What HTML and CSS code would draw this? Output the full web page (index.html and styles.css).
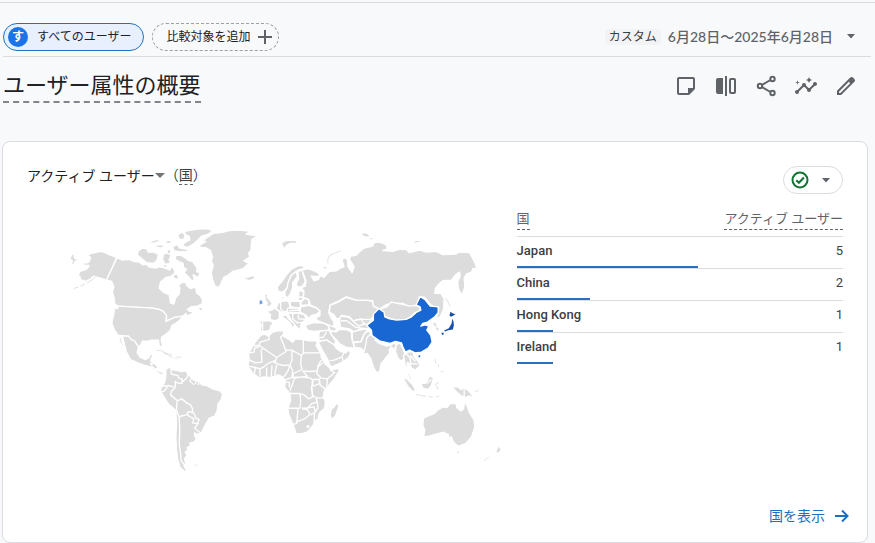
FILE: index.html
```html
<!DOCTYPE html>
<html lang="ja">
<head>
<meta charset="utf-8">
<meta name="viewport" content="width=device-width, initial-scale=1">
<title>ユーザー属性の概要</title>
<link rel="stylesheet" href="styles.css">
</head>
<body>
<div class="page">
  <header class="topbar">
    <div class="chips">
      <button class="chip chip-active" type="button"><span class="chip-badge">す</span>すべてのユーザー</button>
      <button class="chip chip-add" type="button">比較対象を追加
        <svg class="plus" viewBox="0 0 14 14" aria-hidden="true"><path d="M7 0v14M0 7h14"/></svg>
      </button>
    </div>
    <button class="daterange" type="button">
      <span class="preset">カスタム</span>
      <span class="dates">6月28日～2025年6月28日</span>
      <svg class="caret" viewBox="0 0 8 5" aria-hidden="true"><path d="M0 0h8L4 4.5z"/></svg>
    </button>
  </header>

  <div class="titlebar">
    <h1>ユーザー属性の概要</h1>
    <div class="tools">
      <button type="button" aria-label="メモ"><svg viewBox="0 0 24 24"><path d="M19 5v9h-5v5H5V5h14m0-2H5c-1.100 0-2 .9-2 2v14c0 1.100.9 2 2 2h10l6-6V5c0-1.100-.9-2-2-2z"/></svg></button>
      <button type="button" aria-label="比較"><svg viewBox="0 0 24 24"><path d="M4 4h5v16H4a2 2 0 0 1-2-2V6a2 2 0 0 1 2-2zM11 2h2v20h-2zM17 4h3a2 2 0 0 1 2 2v12a2 2 0 0 1-2 2h-3a2 2 0 0 1-2-2V6a2 2 0 0 1 2-2zm0 2v12h3V6z"/></svg></button>
      <button type="button" aria-label="共有"><svg viewBox="0 0 24 24"><g class="line"><circle cx="18.500" cy="5" r="2.200"/><circle cx="6" cy="12" r="2.200"/><circle cx="18.500" cy="19" r="2.200"/><path d="M8 11l8.500-5M8 13l8.500 5"/></g></svg></button>
      <button type="button" aria-label="分析情報"><svg viewBox="0 0 24 24"><path d="M21 8c-1.450 0-2.260 1.440-1.930 2.510l-3.550 3.560c-.3-.09-.74-.09-1.040 0l-2.550-2.550C12.270 10.450 11.460 9 10 9c-1.450 0-2.270 1.440-1.930 2.520l-4.560 4.550C2.440 15.740 1 16.550 1 18c0 1.100.9 2 2 2 1.450 0 2.260-1.440 1.930-2.510l4.550-4.560c.3.090.74.090 1.040 0l2.550 2.550C12.730 16.550 13.540 18 15 18c1.450 0 2.270-1.440 1.930-2.520l3.560-3.550C21.560 12.260 23 11.450 23 10c0-1.100-.9-2-2-2z"/><path d="M15 9l.94-2.070L18 6l-2.060-.93L15 3l-.92 2.070L12 6l2.080.93zM3.500 11L4 9l2-.5L4 8l-.5-2L3 8l-2 .5L3 9z"/></svg></button>
      <button type="button" aria-label="編集"><svg viewBox="0 0 24 24"><path d="M20.410 4.940l-1.350-1.350a2 2 0 0 0-2.830 0L3 16.820V21h4.180L20.410 7.770a2 2 0 0 0 0-2.830zM6.410 19.060L5 19v-1.360l9.820-9.820 1.410 1.410z"/></svg></button>
    </div>
  </div>

  <main class="card">
    <div class="card-head">
      <h2><button class="metric" type="button">アクティブ ユーザー<svg viewBox="0 0 10 5" aria-hidden="true"><path d="M0 0h10L5 5z"/></svg></button><span class="dimension">（<span class="hint">国</span>）</span></h2>
      <button class="status" type="button" aria-label="データの品質">
        <svg class="check" viewBox="0 0 18 18"><circle cx="9" cy="9" r="7.500"/><path d="M5.300 9.200l2.600 2.600 5-5.300"/></svg>
        <svg class="caret" viewBox="0 0 8 5"><path d="M0 0h8L4 4.500z"/></svg>
      </button>
    </div>

    <div class="card-body">
      <svg class="map" viewBox="84 660 1467 765" role="img" aria-label="国別アクティブ ユーザーの地図">
        <!-- North America -->
        <g transform="translate(180 660)">
          <path d="M173 112L150 104 138 98 127 94 108 98 97 100 84 106 94 112 92 122 86 128 70 128 76 136 90 136 86 144 76 150 62 154 58 166 64 172 62 178 80 184 92 178 104 168 116 172 136 178 142 182Z"/>
          <path d="M40 100L46 106 46 114 60 120 48 124 46 132 36 134 40 122 32 116Z"/>
          <path class="isle" d="M110 170L98 180 84 188M78 192L64 198M58 201L44 205"/>
          <path d="M174 113L190 120 210 118 224 124 240 126 250 134 262 132 268 140 290 144 300 140 310 142 322 146 332 150 336 138 346 150 346 160 334 170 320 172 304 186 300 204 312 216 330 224 334 248 344 252 350 232 360 222 362 204 358 196 366 188 378 186 384 198 394 206 404 202 410 204 412 218 424 228 430 240 428 252 414 258 396 260 384 268 392 274 404 272 396 282 384 288 380 280 370 290 346 292 322 304 322 286 312 274 300 268 280 264 176 258 166 250 166 238 160 216 164 200 158 184 150 182 142 180Z"/>
          <path d="M176 258L280 264 300 268 312 274 322 286 320 304 346 292 370 288 364 298 352 308 338 316 334 330 318 344 308 350 306 362 310 374 306 382 300 376 298 360 278 360 262 364 250 362 246 372 238 382 226 364 214 358 208 348 178 346 166 330 158 308 164 282 166 262 176 266Z"/>
          <path d="M190 348L208 348 216 358 226 362 238 380 234 398 244 412 258 418 268 414 274 402 282 404 274 422 288 434 290 450 304 454 318 462 306 464 292 456 278 442 258 436 236 428 214 418 200 392Z"/>
          <path d="M178 350L186 352 190 368 200 386 194 384 184 370Z"/>
          <path class="isle" d="M292 390L308 392 322 400 338 404M352 410L366 412"/>
          <path d="M234 104L238 92 250 84 262 86 268 96 284 96 298 104 294 120 284 130 262 128 248 116Z"/>
          <path d="M350 106L366 106 382 116 388 122 400 124 414 144 412 154 424 160 414 172 402 164 406 182 396 180 386 168 374 158 382 148 372 142 372 130 358 124 348 118Z"/>
          <path d="M312 104L322 98 336 104 330 120 336 128 318 134 310 118ZM308 134L320 132 330 140 316 142ZM340 164L354 162 360 178 346 176Z"/>
          <path d="M418 262L426 262 434 272 420 272Z"/>
        </g>
        <!-- Arctic islands, Greenland and Iceland -->
        <g transform="translate(420 660)">
          <path d="M136 34L170 28 205 26 220 32 208 42 188 48 176 60 160 74 146 82 130 78 136 68 152 60 150 48 138 44Z"/>
          <path d="M116 42L130 36 138 46 134 58 120 58ZM100 80L114 74 122 84 144 88 148 94 124 96 104 92ZM26 68L52 58 68 62 44 70ZM44 80L56 74 80 76 66 84ZM78 64L92 60 98 68 84 72ZM84 90L96 88 94 102 84 100Z"/>
          <path d="M180 76L200 64 184 68 204 52 222 40 246 38 270 32 300 30 332 34 320 42 356 48 338 58 336 72 336 88 328 100 332 110 314 122 328 130 312 146 296 150 280 154 268 164 254 172 248 184 242 198 236 203 226 196 220 178 216 158 222 136 216 124 220 112 214 92 202 84 184 82Z"/>
          <path d="M314 168L322 172 342 166 348 174 330 182 318 178Z"/>
        </g>
        <!-- South America -->
        <g transform="translate(450 1050)">
          <path d="M50 58L62 50 66 58 78 60 96 64 110 62 116 70 122 78 134 90 150 94 158 104 172 106 190 116 212 122 220 132 216 148 206 162 204 182 196 198 180 204 172 218 162 236 156 250 144 252 136 248 136 256 142 266 134 276 122 278 124 286 114 292 116 300 108 306 114 314 106 326 110 340 104 346 110 356 118 364 104 362 92 350 86 330 82 300 80 260 82 220 80 180 58 162 44 140 34 124 36 108 46 98 50 80Z"/>
          <path class="border" d="M66 58L66 72 86 76 88 84 98 86 98 100 84 98 78 94 78 112 66 124 64 134 78 146 84 150 82 180 90 200 92 240 90 280 94 310 96 332 112 350M36 110L46 106 56 108 46 122 36 126M56 106L74 110M98 86L102 94 114 82 116 72M128 84L122 92 134 104M142 92L138 102M150 96L146 104M84 152L98 146 112 158 124 164 130 176 130 186 118 184 112 194 94 198 88 204M114 192L120 198 134 206 130 218 144 220 150 208 140 204 136 192 130 186M148 218L136 234 144 240 156 250"/>
          <path class="isle" d="M42 8L56 14 70 22M76 24L84 24M136 344L144 345"/>
          <path d="M4 40L16 40 26 50 22 58 12 52Z"/>
        </g>
        <!-- Europe, Africa and western Asia -->
        <g transform="translate(720 750)">
          <path d="M64 256L76 252 88 258 100 246 116 242 134 242 132 258 146 266 160 276 168 266 190 268 210 272 230 272 234 280 230 286 244 308 246 322 256 340 270 352 274 360 300 354 298 364 282 390 264 410 254 424 252 440 258 454 256 474 240 488 236 506 226 514 222 524 206 544 188 550 170 550 166 536 158 516 148 492 146 474 154 450 152 430 136 412 138 392 130 380 116 374 94 382 74 380 60 384 40 368 28 352 26 342 30 330 28 310 42 284 54 268Z"/>
          <path d="M294 456L298 470 288 498 278 508 272 496 276 476 284 470Z"/>
          <path class="border" d="M42 286L60 286 62 276 90 268 88 258M30 308L44 306 46 294 60 290M60 286L112 322 140 304 134 286 124 262 132 252M70 296L66 300 68 336 48 338 32 330M112 322L110 330 86 340 74 350 62 356 48 352 28 348M140 300L158 300 186 316 192 310 192 268M192 308L242 308M186 316L184 340 188 358 162 370 160 382 186 380 204 378 190 362M158 300L158 330 152 344 132 346 116 342 104 336 110 330M152 344L146 362 134 380M112 344L106 374M190 362L210 364 234 362 236 346 246 330M152 344L160 362 158 382 138 388M250 338L236 350 232 370 246 384 264 386 286 368 272 358M240 384L242 404 258 416M264 386L262 408M222 388L240 388 240 400 222 408 218 398ZM166 384L160 400 152 422M166 384L188 380 214 384 222 392 216 412 220 440 208 446 194 434 182 430 152 430M138 396L150 396 150 412M218 412L220 436 234 444 254 442M182 430L184 452 182 474 148 474M188 474L204 474 218 460 234 456 230 444M176 476L174 496 172 520 160 522M188 476L204 478 212 492 196 506 174 514M204 474L224 470 228 486 214 494M234 456L236 472 226 488 224 516M62 356L62 380M82 352L82 380M98 346L96 380M48 352L46 368"/>
          <circle class="gap" cx="206" cy="529" r="5"/>
          <path d="M116 122L114 110 128 94 140 76 156 58 178 46 192 48 196 56 182 58 170 64 156 76 146 98 144 112 134 124 124 126Z"/>
          <path d="M146 98L156 76 170 64 174 80 160 98 160 112 154 130 146 142 138 140 136 126 144 112Z"/>
          <path d="M176 66L188 58 192 76 198 94 190 108 176 112 170 102 178 86Z"/>
          <path d="M76 130L86 134 84 142 92 150 100 162 92 168 78 170 84 160 78 150Z"/>
          <path d="M82 184L96 180 106 174 120 184 120 206 108 212 92 208 94 194Z"/>
          <path d="M60 212L90 212 104 218 94 228 92 240 80 244 62 242 66 226Z"/>
          <path class="border" d="M70 214L70 242"/>
          <path d="M110 176L116 160 124 154 148 152 152 172 144 184 126 186Z"/>
          <path class="border" d="M124 156L124 176 134 186"/>
          <path d="M128 138L134 138 134 150 128 148ZM152 154L182 154 184 168 178 174 154 170ZM178 122L192 124 192 140 178 142ZM174 142L190 142 192 150 180 152Z"/>
          <path d="M186 154L198 144 208 150 208 164 184 166Z"/>
          <path d="M184 170L208 166 232 174 242 184 232 192 216 196 210 206 198 194 182 186Z"/>
          <path d="M126 198L142 194 146 204 168 222 160 234 152 218 134 204Z"/>
          <path d="M146 190L178 190 196 194 200 210 186 218 182 240 170 228 154 208Z"/>
          <path class="border" d="M160 192L160 206 176 220M176 194L178 206 198 208M166 214L186 218"/>
          <path d="M146 174L176 174 182 188 150 188 142 184Z"/>
          <path class="border" d="M150 182L180 180"/>
          <path d="M198 226L220 218 250 218 266 224 270 240 244 242 224 244 204 240Z"/>
          <path d="M240 244L268 240 278 256 290 276 284 284 262 270 240 272 238 258Z"/>
          <path class="border" d="M240 262L252 262 262 244"/>
          <path d="M236 274L262 270 284 284 292 296 304 304 320 308 326 298 334 308 328 322 312 334 296 342 276 350 270 342 264 326 250 302Z"/>
          <path class="border" d="M270 332L284 330 308 320 314 308M308 320L312 334"/>
          <path d="M256 220L276 224 292 236 286 244 272 240 268 228Z"/>
          <path d="M274 242L290 246 300 238 320 238 336 246 338 270 346 294 322 292 300 280 288 266 276 254Z"/>
          <path d="M272 166L296 156 320 142 350 150 380 150 400 154 402 168 418 176 410 186 396 206 384 212 364 206 340 212 330 200 306 196 304 206 290 204 284 194 270 186Z"/>
          <path d="M300 212L304 198 330 202 340 212 364 208 396 208 386 222 388 236 366 234 346 246 330 236 304 232Z"/>
          <path class="border" d="M304 212L322 212 350 232 366 234M340 212L358 228 372 222 388 222M366 210L376 222"/>
          <path d="M338 246L360 240 388 236 374 252 364 274 340 276Z"/>
          <path d="M342 278L366 274 374 252 388 240 396 254 388 270 390 290 378 306 364 294 346 292Z"/>
          <path class="ireland" d="M61 151L68 151 70 160 61 163Z"/>
          <!-- Russia -->
          <path d="M188 60L206 56 228 64 242 72 236 80 216 78 224 92 238 88 240 76 254 82 270 64 292 62 300 56 314 50 308 30 314 22 324 28 326 50 338 68 344 50 330 28 334 18 350 16 360 6 374 -6 400 -12 404 -22 420 -24 440 -16 444 -4 430 2 460 4 480 -2 500 -2 510 8 540 0 562 6 590 4 610 14 650 12 660 6 690 8 698 22 706 38 712 54 700 56 696 66 680 72 674 86 676 110 668 136 658 120 654 96 662 78 660 66 648 74 636 90 610 92 600 100 588 114 586 130 604 130 614 146 612 178 602 200 590 208 594 192 598 172 584 172 570 160 556 142 540 140 534 154 538 174 514 172 490 160 460 160 440 164 420 176 402 168 400 152 380 150 350 150 320 140 296 154 272 164 268 188 276 204 284 216 282 230 256 220 240 214 228 206 242 196 242 182 230 172 214 166 208 148 192 142 194 124 186 112 198 108 200 92Z"/>
          <path class="isle" d="M266 40Q262 20 280 12T304 2"/>
          <path d="M250 48L264 50 266 58 252 56Z"/>
        </g>
        <!-- Arctic Ocean islands -->
        <g transform="translate(1020 660)">
          <path d="M62 40L80 38 92 46 88 52 74 50ZM88 54L102 52 102 58 90 60ZM218 64L238 60 246 66 226 70ZM246 64L262 62 260 68Z"/>
          <path class="isle" d="M318 234L326 246 332 260"/>
          <path d="M-174 68L-156 60-130 62-124 70-146 70-158 76-166 88Z"/>
        </g>
        <!-- East and South Asia, Oceania -->
        <g transform="translate(1080 870)">
          <path d="M16 178L20 158 22 144 32 132 44 142 52 150 60 156 80 166 92 164 108 158 110 166 104 180 98 172 90 176 90 190 72 212 64 222 62 240 54 250 44 236 34 206 24 190 12 194Z"/>
          <path class="border" d="M46 148L56 158 82 168 94 164 94 184"/>
          <path d="M64 242L70 250 64 256Z"/>
          <path d="M60 58L82 50 96 36 126 42 150 48 170 46 184 54 180 62 166 68 154 80 140 88 110 90 90 84 76 78 72 66Z"/>
          <path class="blue" d="M22 106L42 90 42 72 58 56 74 66 76 80 90 86 112 90 140 88 156 80 172 66 184 60 182 50 170 44 182 20 196 28 212 48 236 50 236 68 226 80 204 96 190 100 184 108 198 104 208 108 202 120 214 136 218 156 206 174 186 186 166 188 150 180 138 186 130 170 126 158 108 154 92 160 60 152 38 136 36 120Z"/>
          <path class="blue-flat" d="M177 196L183 196 181 202 177 200Z"/>
          <path d="M218 98L228 94 234 108 240 118 236 126 228 116Z"/>
          <path class="border" d="M226 112L236 108"/>
          <path class="navy" d="M273 65L280 70 288 72 281 77 274 80 270 76ZM279 86L282 94 283 106 280 118 266 120 256 124 254 121 268 114 276 101ZM246 128L253 128 251 135 247 133Z"/>
          <path d="M110 164L122 158 130 176 136 190 132 206 126 214 116 204 108 184Z"/>
          <path d="M132 196L148 184 162 186 162 196 176 214 182 226 168 240 156 234 152 222 144 216 142 236 152 256 160 272 150 266 140 240Z"/>
          <path class="border" d="M140 190L152 204 154 220 174 222M152 196L168 214"/>
          <path d="M128 260L142 266 160 284 170 302 160 304 146 290Z"/>
          <path d="M184 280L200 276 212 256 222 264 216 286 206 298 190 294Z"/>
          <path class="border" d="M186 280L204 278 216 268"/>
          <path class="isle" d="M170 312L184 316 200 318M208 318L220 322M228 320L240 318M226 284L238 276M230 286L236 298M226 206L230 220M236 222L238 230M244 246L252 242"/>
          <path d="M278 290L296 290 304 298 314 292 330 304 346 326 330 318 316 322 304 316 292 306Z"/>
          <path class="border" d="M314 290L314 324"/>
          <path class="isle" d="M346 304L356 302"/>
          <path d="M192 384L204 378 224 370 236 358 250 350 262 352 272 340 290 340 292 352 304 362 312 356 316 332 324 350 330 368 344 390 346 410 336 440 318 460 296 468 282 456 276 440 268 442 266 432 252 426 230 432 208 438 192 440 196 420 190 404Z"/>
          <path d="M290 480L302 484 294 496ZM416 466L426 478 416 490 408 486ZM404 488L388 504 366 520 372 508 390 496Z"/>
        </g>
      </svg>

      <table class="countries" id="countries">
        <thead><tr><th scope="col"><span class="hint">国</span></th><th scope="col"><span class="hint">アクティブ ユーザー</span></th></tr></thead>
        <tbody>
          <tr><td>Japan</td><td>5</td></tr>
          <tr class="bar"><td colspan="2"><div style="width:55.600%"></div></td></tr>
          <tr><td>China</td><td>2</td></tr>
          <tr class="bar"><td colspan="2"><div style="width:22.400%"></div></td></tr>
          <tr><td>Hong Kong</td><td>1</td></tr>
          <tr class="bar"><td colspan="2"><div style="width:11.100%"></div></td></tr>
          <tr><td>Ireland</td><td>1</td></tr>
          <tr class="bar"><td colspan="2"><div style="width:11.100%"></div></td></tr>
        </tbody>
      </table>
    </div>

    <a class="more" href="#countries">国を表示
      <svg viewBox="0 0 14 14" aria-hidden="true"><path d="M0 7h12M7 1.500L12.500 7 7 12.500"/></svg>
    </a>
  </main>
</div>
</body>
</html>
```
FILE: styles.css
```css
* { box-sizing: border-box; }

body {
  margin: 0;
  background: #f8f9fb;
  color: #202124;
  font-family: Roboto, "Noto Sans CJK JP", sans-serif;
  font-size: 14px;
}

button {
  margin: 0;
  padding: 0;
  border: 0;
  background: none;
  color: inherit;
  font: inherit;
}

svg { display: block; flex: none; }

.page {
  margin-top: 2px;
  padding: 0 4px 0 2px;
  border-top: 1px solid #dadce0;
}

.topbar {
  display: flex;
  justify-content: space-between;
  align-items: center;
  height: 54px;
  margin-left: 1px;
  padding: 14px 16px 0 0;
  border-bottom: 1px solid #dadce0;
}

.chips { display: flex; gap: 8px; }

.chip {
  display: flex;
  align-items: center;
  height: 28px;
  border-radius: 14px;
  font-size: 12px;
  line-height: 16px;
  white-space: nowrap;
}

.chip-active {
  gap: 9px;
  padding: 0 12px 0 4px;
  border: 1px solid #1a73c8;
  background: #e8f0fe;
}

.chip-badge {
  width: 20px;
  height: 20px;
  border-radius: 50%;
  background: #1a73e8;
  color: #fff;
  font-weight: 700;
  line-height: 20px;
  text-align: center;
}

.chip-add {
  gap: 8px;
  padding: 0 6px 0 13px;
  border: 1px dashed #9aa0a6;
}

.plus { width: 14px; height: 14px; fill: none; stroke: #5f6368; stroke-width: 2; }

.daterange {
  display: flex;
  align-items: center;
  color: #5f6368;
  white-space: nowrap;
}

.preset {
  margin-right: 7px;
  padding: 0 4px;
  border-radius: 2px;
  background: #f1f3f4;
  color: #3c4043;
  font-size: 12px;
  line-height: 16px;
}

.dates { font-family: Lato, "Noto Sans CJK JP", sans-serif; font-weight: 500; line-height: 20px; }

.caret { width: 8px; height: 5px; fill: #5f6368; }

.daterange .caret { margin-left: 14px; }

.titlebar {
  display: flex;
  justify-content: space-between;
  align-items: flex-start;
  padding: 14px 13px 0 1px;
}

h1 {
  margin: 0;
  border-bottom: 2px dashed #80868b;
  font-size: 22px;
  font-weight: 400;
  line-height: 30px;
}

.tools { display: flex; gap: 16px; padding-top: 3px; }

.tools svg { width: 24px; height: 24px; fill: #5f6368; }

.tools .line { fill: none; stroke: #5f6368; stroke-width: 2; }

.card {
  display: flex;
  flex-direction: column;
  min-height: 402px;
  margin: 38px 3px 0 0;
  padding: 24px 24px 16px;
  border: 1px solid #dadce0;
  border-radius: 8px;
  background: #fff;
}

.card-head {
  display: flex;
  justify-content: space-between;
  align-items: flex-start;
}

h2 {
  display: flex;
  margin: 0;
  font-size: 14px;
  font-weight: 400;
  line-height: 18px;
}

.metric { display: flex; align-items: center; line-height: 18px; }

.metric svg { width: 10px; height: 5px; fill: #757575; }

.dimension { color: #3c4043; }

.hint { display: inline-block; border-bottom: 1px dashed #5f6368; }

.status {
  display: flex;
  align-items: center;
  gap: 13px;
  width: 60px;
  height: 28px;
  padding: 0 7px;
  border: 1px solid #dadce0;
  border-radius: 14px;
}

.check { width: 18px; height: 18px; fill: none; stroke: #137333; stroke-width: 2; }

.card-body {
  display: grid;
  grid-template-columns: 3fr 2fr;
  align-items: start;
  padding-top: 15px;
}

.map { width: 100%; margin-top: 11px; fill: #dcdcdc; stroke: #fff; stroke-width: 4; stroke-linejoin: round; }

.map .border { fill: none; }
.map .isle { fill: none; stroke: #e4e4e4; stroke-width: 3; }
.map .gap { fill: #fff; stroke: none; }
.map .blue { fill: #1967d2; }
.map .blue-flat { fill: #1967d2; stroke: none; }
.map .navy { fill: #174ea6; stroke: none; }
.map .ireland { fill: #6fa0e0; stroke: none; }

.countries {
  width: 100%;
  border-collapse: collapse;
  font-size: 13px;
}

.countries th {
  height: 27px;
  padding: 0 0 6px;
  border-bottom: 1px solid #dadce0;
  color: #5f6368;
  font-size: 13px;
  font-weight: 400;
  line-height: 20px;
  text-align: left;
}

.countries td {
  height: 29px;
  padding: 0;
  color: #3c4043;
  font-weight: 500;
  line-height: 16px;
}

.countries th:last-child,
.countries td:last-child { text-align: right; }

.countries td:last-child { font-weight: 400; }

.countries .bar td { height: 3px; border-bottom: 1px solid #dadce0; }
.countries .bar:last-child td { border-bottom: 0; }

.bar div { height: 2px; background: #2f6eba; }

.more {
  display: flex;
  align-items: center;
  align-self: flex-end;
  gap: 10px;
  margin: auto -6px 0 0;
  color: #1a6fc0;
  line-height: 20px;
  text-decoration: none;
}

.more svg { width: 14px; height: 14px; fill: none; stroke: #1a6fc0; stroke-width: 2; }
```
